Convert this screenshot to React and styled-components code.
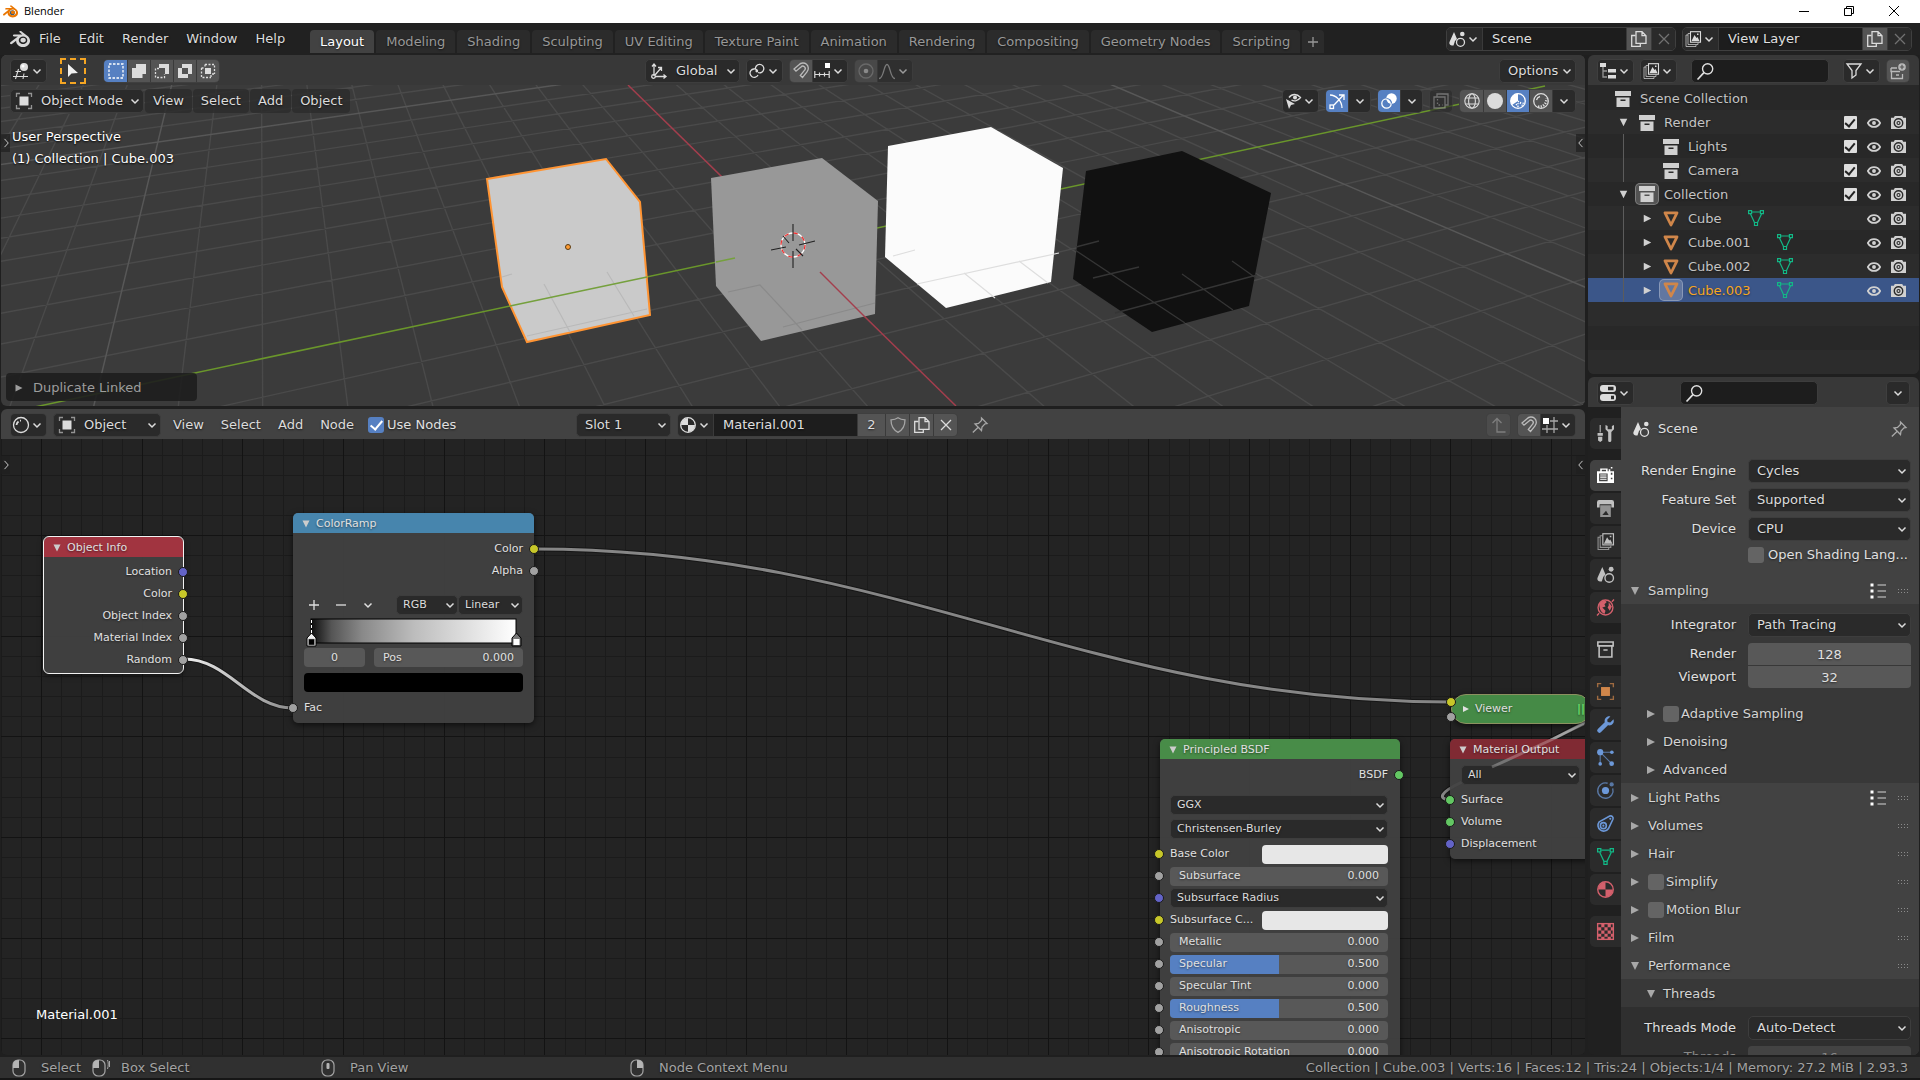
import React from 'react';
import styled, { createGlobalStyle, css } from 'styled-components';
import { SiBlender } from 'react-icons/si';

const GlobalStyle = createGlobalStyle`
  * { box-sizing: border-box; }

  body {
    margin: 0;
    background: #1f1f1f;
    color: #e0e0e0;
    font: 13px/16px "DejaVu Sans", sans-serif;
  }

  button, input, select {
    font: inherit;
    color: inherit;
    margin: 0;
    padding: 0;
    border: 0;
    background: none;
    text-shadow: inherit;
  }
`;

/* ---------- icons ---------- */

const Svg = styled.svg`
  display: block;
  flex: none;
  overflow: visible;
`;

const line = { fill: 'none', stroke: 'currentColor', strokeWidth: 1.3 };

const shapes = {
  viewport: (
    <g>
      <path {...line} strokeWidth="1.1" d="M5.5 6 2.5 16M11 10.500 10 16M2.500 8.500H8M0 13.500h15" />
      <circle cx="11" cy="4" r="4" fill="currentColor" />
      <circle cx="10" cy="3" r="1.500" fill="#fff" />
    </g>
  ),
  objectMode: (
    <g>
      <path {...line} opacity=".6" d="M.5 4V.5H4M12 .5h3.500V4M15.500 12v3.500H12M4 15.500H.5V12" />
      <rect x="3.500" y="3.500" width="9" height="9" fill="currentColor" />
    </g>
  ),
  dashBox: <rect {...line} x="1" y="1" width="14" height="14" strokeDasharray="2.500 1.500" stroke="#fff" />,
  extend: <path fill="currentColor" d="M5 1h10v10h-3.500v4H1V5h4z" />,
  subtract: (
    <g>
      <path fill="currentColor" d="M5 1h10v10h-4V5H5z" />
      <path {...line} strokeDasharray="2 1.500" d="M5 5.500H1.500v9h9V11" />
    </g>
  ),
  invert: <path fill="currentColor" fillRule="evenodd" d="M5 1h10v10h-4v4H1V5h4zM5 5v6h6V5z" />,
  intersect: (
    <g>
      <path {...line} strokeDasharray="2 1.500" d="M5 1.500h9.500V11M1.500 5v9.500H11M5 1.500V4M12 11h2.500M1.500 5H4M11 12v2.500" />
      <rect x="5" y="5" width="6" height="6" fill="currentColor" />
    </g>
  ),
  axes: (
    <g {...line}>
      <path d="M3 13V1M1 3.500 3 1l2 2.500M4 13.500h11M12.500 11.500l2.500 2-2.500 2M4 12l6-7M7 4.500h3.500V8" />
      <circle cx="2.500" cy="13.500" r="1.800" />
    </g>
  ),
  pivot: (
    <g {...line}>
      <path d="M9 9.500A4.200 4.200 0 1 0 6.500 6.500M8 7a4.200 4.200 0 1 0 1 5" />
      <circle cx="7.800" cy="8" r="1.400" fill="currentColor" stroke="none" />
    </g>
  ),
  magnet: (
    <path {...line} opacity=".75" d="M1 6 6 1.800a5.300 5.300 0 0 1 8 7L9.500 14.500 7.300 12.500l4.300-5.300a2.400 2.400 0 0 0-3.600-3.200L3 8.200z" />
  ),
  snapInc: (
    <g>
      <path {...line} d="M.8 8v7M15.200 8v7M5.500 9.500v4M10.500 9.500v4M1 11.500h14" strokeWidth="1.200" />
      <rect x="11" y="0" width="5" height="5" fill="#fff" />
    </g>
  ),
  snapGrid: (
    <g>
      <path {...line} opacity=".7" d="M5 8v8M12 0v16M8 4h8M0 12h16" />
      <rect x="1" y="1" width="6" height="6" fill="#fff" />
    </g>
  ),
  proportional: (
    <g opacity=".8">
      <circle {...line} cx="8" cy="8" r="7" opacity=".5" />
      <circle cx="8" cy="8" r="2.300" fill="currentColor" />
    </g>
  ),
  falloff: <path {...line} opacity=".7" d="M0 15.500c5 0 4.500-14 8-14s3 14 8 14" />,
  visibility: (
    <g>
      <path d="M1 6l9 5-4 1-2 4z" fill="currentColor" />
      <path {...line} d="M4 4.500c3-4 8-4 11.500 0-3 4-7 4-9 2.500" />
      <circle cx="10" cy="4.500" r="2" fill="currentColor" />
    </g>
  ),
  gizmo: (
    <g {...line} stroke="#fff">
      <path d="M1 2c6 0 12 6 12 13M5 12l9-9.500M10 2h5v5" />
      <rect x="1" y="12" width="3.500" height="3.500" />
    </g>
  ),
  overlay: (
    <g>
      <circle cx="10.500" cy="5.500" r="5.200" fill="#fff" />
      <circle cx="5.500" cy="10.500" r="4.700" fill="none" stroke="#fff" strokeWidth="1.300" />
      <path d="M5.500 5.500a5 5 0 0 1 5 5" fill="none" stroke="#5680c2" strokeWidth="1.200" />
    </g>
  ),
  xray: (
    <g {...line} opacity=".6">
      <path d="M4 4V1h11v11h-3M1 4h11v11H1z" />
      <path strokeDasharray="1.500 2" d="M4.500 6v6h5" />
    </g>
  ),
  wire: (
    <g {...line} strokeWidth="1.100">
      <circle cx="8" cy="8" r="7.200" />
      <ellipse cx="8" cy="8" rx="3.400" ry="7.200" />
      <path d="M1.500 5h13M1.500 11h13" />
    </g>
  ),
  solid: <circle cx="8" cy="8" r="8" fill="currentColor" />,
  material: (
    <g>
      <circle {...line} cx="8" cy="8" r="7.300" />
      <path fill="currentColor" d="M8 1a7 7 0 0 0-7 7h7zM8 8v7a7 7 0 0 0 7-7z" />
    </g>
  ),
  preview: (
    <g>
      <circle {...line} stroke="#fff" cx="8" cy="8" r="7.300" />
      <path fill="#fff" d="M8 .5a7.500 7.500 0 0 0-6 11.500L8 8z" />
      <path stroke="#fff" strokeWidth="1.300" strokeDasharray="1.300 1.300" fill="none" d="M8 8l5 5M6 11l3 4M10 9.500l4 1M8 10v5" />
    </g>
  ),
  rendered: (
    <g {...line}>
      <circle cx="8" cy="8" r="7.300" />
      <path d="M3.500 7A5 5 0 0 1 7 3.500" />
      <path strokeDasharray="1.300 1.300" strokeWidth="2.500" d="M5 13.500c5 1 8.500-3 8.500-8" />
    </g>
  ),
  scene: (
    <g>
      <path fill="currentColor" d="M5 1 .5 11c-.8 2.500 1.500 4 4 3.500L6 10l2-2z" />
      <circle cx="13.300" cy="3" r="2.300" fill="currentColor" />
      <circle {...line} cx="11.500" cy="11.300" r="4" />
    </g>
  ),
  viewLayer: (
    <g>
      <path {...line} opacity=".7" d="M3 4H1v11.500h10V14M5 2.500H3v11h10V12" strokeWidth="1" />
      <rect {...line} x="5.500" y=".7" width="10" height="10.500" strokeWidth="1.100" />
      <path fill="currentColor" d="m6.500 10 3-6 2 3 1-1 2 4zM12 2.500h1.500V4H12z" />
    </g>
  ),
  copy: (
    <g {...line}>
      <path d="M4.500 4.500H.7v10.800h8.600v-3" />
      <path d="M5 .7h6l4 4v7.600H5zM11 .7v4h4" />
    </g>
  ),
  close: <path {...line} d="m3 3 10 10M13 3 3 13" />,
  plus: <path {...line} d="M8 3v10M3 8h10" />,
  minus: <path {...line} d="M3 8h10" />,
  chevron: <path {...line} strokeWidth="1.500" d="m4.500 6.500 3.500 3.500 3.500-3.500" />,
  search: (
    <g {...line}>
      <circle cx="10" cy="5.500" r="4.800" />
      <path d="M6.500 9 .5 15.500" strokeWidth="1.600" />
    </g>
  ),
  filter: <path {...line} d="M1 1h14l-5 6.500V12l-4 3V7.500z" />,
  outliner: (
    <g>
      <path {...line} opacity=".6" d="M3 4v10h4M3 8h4" />
      <path fill="currentColor" d="M0 0h6v4H0zM8 6h8v3.500H8zM8 12h8v3.500H8z" />
    </g>
  ),
  newCollection: (
    <g opacity=".75">
      <path {...line} d="M1 5h6M1.500 8.500v7h11V11M1 5v3.500h9M6 12h3" />
      <circle cx="12" cy="4" r="3.800" fill="currentColor" />
      <path stroke="#565656" strokeWidth="1.200" d="M12 1.800v4.400M9.800 4h4.400" />
    </g>
  ),
  collection: <path fill="currentColor" fillRule="evenodd" d="M0 0h16v5H0zM1.500 6.500h13V16h-13zM5.500 8.500V10h5V8.500z" />,
  collectionTab: (
    <g {...line} strokeWidth="1.500">
      <path d="M.8 1h14.400v3.600H.8zM2 5v10h12V5M6 8.500h4" />
    </g>
  ),
  mesh: <path fill="none" stroke="#d0864a" strokeWidth="2.800" strokeLinejoin="round" d="M2 1.800h12L8 14z" />,
  meshData: (
    <g fill="none" stroke="#12b886" strokeWidth="1.200">
      <path d="M4 2h8M2.500 4l4 8.500M13.500 4l-4 8.500" />
      <path d="M.6.6h3v3h-3zM12.400.6h3v3h-3zM6.500 12.500h3v3h-3z" />
    </g>
  ),
  eye: (
    <g>
      <path {...line} strokeWidth="2" d="M1 8c3-6 11-6 14 0-3 6-11 6-14 0z" />
      <circle cx="8" cy="8" r="2.200" fill="currentColor" />
    </g>
  ),
  camera: (
    <g>
      <path fill="currentColor" fillRule="evenodd" d="M0 3h3l1-2h8l1 2h3v12H0z" />
      <circle cx="8" cy="8.500" r="4.500" fill="none" stroke="#2b2b2b" strokeWidth="1.500" />
      <circle cx="8" cy="8.500" r="1.600" fill="none" stroke="#2b2b2b" strokeWidth="1.200" />
    </g>
  ),
  properties: (
    <g>
      <rect x="0" y="0" width="16" height="7" rx="3" fill="currentColor" />
      <rect x="0" y="9" width="16" height="7" rx="3" fill="currentColor" />
      <path fill="#2b2b2b" d="M8 1.700h5.500v3.600H8zM11 10.700h3v3.600h-3z" />
    </g>
  ),
  pin: <path {...line} opacity=".65" d="m9.500 1 5.500 5.500-2 .3L10 10l-.5 3.500L3 7l3.500-.5L9.500 3.500zM6 10.500.8 15.500" />,
  shield: <path {...line} opacity=".6" d="M8 .8c2 1.500 4.500 2 7 2 0 6-2 10-7 12.500C3 12.800 1 8.800 1 2.800c2.500 0 5-.5 7-2z" />,
  up: <path {...line} opacity=".6" d="M1.500 6 6 1.500 10.500 6M6 2v13h8.500" />,
  shader: (
    <g {...line}>
      <circle cx="8" cy="8" r="7.500" />
      <path strokeWidth="1.800" d="M3.500 8A5 5 0 0 1 5.500 4.500M7 3.600h1" />
    </g>
  ),
  list: (
    <g>
      <path {...line} strokeWidth="1" d="M7.500 2H16M7.500 8H16M7.500 14H16" />
      <path fill="#fff" d="M.5.5h3v3h-3zM.5 6.500h3v3h-3zM.5 12.500h3v3h-3z" />
    </g>
  ),
  grip: <path stroke="#8c8c8c" strokeWidth="1" strokeDasharray="1 2" d="M3 6.500h11M3 9.500h11" />,
  tools: (
    <g fill="currentColor">
      <path d="M2.500 0h1v7h-1zM.5 7.500h5V10h-5zM1 11h4v3.500L3 16l-2-1.500z" />
      <path d="M8 0v4l2.500 2.500v8a1.500 1.500 0 0 0 3 0v-8L16 4V0l-2 1v3h-4V1z" />
    </g>
  ),
  render: (
    <path fill="currentColor" fillRule="evenodd" d="M0 4h3V1.500h7V4h1V2h1.500v2H16v11H0zM4.500 2.500V4h4V2.500zM2 6v7.500h8V6zM13 5.500v1.700h1.500V5.500zM13 10v1.500h1.500V10zM3 7h6v1H3zM3 9h6v1H3zM3 11h6v1H3zM13 0h1.500v1.500H13z" />
  ),
  output: (
    <g>
      <path fill="currentColor" d="M0 2a2 2 0 0 1 2-2h12a2 2 0 0 1 2 2v5h-2.500V4h-11v3H0z" />
      <path fill="currentColor" opacity=".7" fillRule="evenodd" d="M3 5h10v11H3zM5 14h6l-2.500-4z" />
    </g>
  ),
  world: (
    <g color="#d4606c">
      <circle {...line} cx="8" cy="8" r="7" />
      <path fill="currentColor" d="M2 4c3-3 7-3 7-1L7 5l1 2-3 1 3 3-1 3C4 13 2 9 2 4zM11 3l3 4-2 4-2-3 1-2z" />
      <path {...line} d="m0 15.500 2-2M14 2.500l2-2" />
    </g>
  ),
  objectTab: (
    <g color="#d0864a">
      <path {...line} opacity=".7" d="M.6 4V.6H4M12 .6h3.400V4M15.400 12v3.400H12M4 15.400H.6V12" />
      <rect x="3.800" y="3.800" width="8.400" height="8.400" fill="currentColor" />
    </g>
  ),
  wrench: (
    <path fill="#6c98d8" d="M15.500 3 12.500 6l-2.500-.3L9.600 3.500l3-3C10 -.5 6.500 2 7.300 5.800L.8 12.300a1.900 1.900 0 0 0 2.800 2.900l6.700-6.500C14 9.500 16.800 6.500 15.500 3z" />
  ),
  particles: (
    <g color="#6c98d8">
      <path {...line} opacity=".7" strokeWidth="1" d="M3 3h11M3 3v11M3 3l10.500 10.500" />
      <g fill="currentColor">
        <circle cx="3" cy="3" r="2.900" />
        <circle cx="14" cy="3" r="1.700" />
        <circle cx="3" cy="14" r="1.700" />
        <circle cx="13.800" cy="13.800" r="2.200" />
      </g>
    </g>
  ),
  physics: (
    <g color="#6c98d8">
      <path {...line} opacity=".7" d="M10 1.200A7.200 7.200 0 1 0 14.800 6" />
      <circle cx="8" cy="8" r="3.400" fill="currentColor" />
      <circle cx="13.800" cy="2.300" r="2" fill="currentColor" opacity=".7" />
    </g>
  ),
  constraint: (
    <g color="#6c98d8">
      <path {...line} strokeWidth="1.500" d="M2 6.500 12 1a2.300 2.300 0 0 1 3 3l-4.300 9A5.300 5.300 0 1 1 2 6.500z" />
      <circle {...line} strokeWidth="1.500" cx="6" cy="10" r="2.800" />
      <circle cx="6" cy="10" r="1" fill="currentColor" />
      <circle cx="12.500" cy="3.500" r="1" fill="currentColor" />
    </g>
  ),
  materialTab: (
    <g color="#d4606c">
      <circle {...line} cx="8" cy="8" r="7.300" />
      <path fill="currentColor" d="M8 1a7 7 0 0 0-7 7h7zM8 8v7a7 7 0 0 0 7-7z" />
    </g>
  ),
  texture: (
    <g color="#d4606c">
      <rect {...line} x=".6" y=".6" width="14.800" height="14.800" />
      <path fill="currentColor" d="M4 1h3v3H4zM10 1h3v3h-3zM1 4h3v3H1zM7 4h3v3H7zM13 4h2v3h-2zM4 7h3v3H4zM10 7h3v3h-3zM1 10h3v3H1zM7 10h3v3H7zM13 10h2v3h-2zM4 13h3v2H4zM10 13h3v2h-3z" />
    </g>
  ),
  left: <path {...line} d="M10 2.500 5 8l5 5.500" />,
  right: <path {...line} d="m6 2.500 5 5.500-5 5.500" />,
  open: <path fill="currentColor" d="M4 4h8l-4 8z" />,
  shut: <path fill="currentColor" d="M4 4v8l8-4z" />,
};

const Icon = ({ name, size = 16 }) => (
  <Svg width={size} height={size} viewBox="0 0 16 16" aria-hidden="true">
    {shapes[name]}
  </Svg>
);

const Mouse = ({ button, drag }) => (
  <Svg width="20" height="18" viewBox="0 0 20 18" aria-hidden="true">
    <rect x="1" y="1" width="12" height="16" rx="5" fill="none" stroke="#a5a5a5" strokeWidth="1.200" />
    {button === 'left' && <path fill="#b5b5b5" d="M1 9V6a5 5 0 0 1 5-5h1v8z" />}
    {button === 'right' && <path fill="#b5b5b5" d="M13 9V6a5 5 0 0 0-5-5H7v8z" />}
    {button === 'middle' && <rect x="5.500" y="4" width="3" height="6" rx="1" fill="#b5b5b5" />}
    {drag && <path d="M15.500 1c1 2 1 6 0 9M17.500 2v6" fill="none" stroke="#a5a5a5" />}
  </Svg>
);

/* ---------- shared controls ---------- */

const Row = styled.div`
  display: flex;
  align-items: center;
  gap: ${p => p.$gap || 0}px;
  ${p => p.$basis && css`
    flex: 0 0 ${p.$basis}px;
    min-width: 0;
  `}
`;

const Spacer = styled.div`
  flex: ${p => p.$grow || 1};
`;

const Header = styled.header`
  position: relative;
  z-index: 1;
  flex: none;
  display: flex;
  align-items: center;
  height: 30px;
  padding: 2px 9px 0;
  background: ${p => p.$tone || '#383838'};
  text-shadow: 0 1px 2px rgba(0, 0, 0, .6);
`;

const Group = styled.div`
  display: inline-flex;
  flex: none;
  height: 24px;
  border: 1px solid #3f3f3f;
  border-radius: 5px;
  overflow: hidden;
  opacity: ${p => p.$dim ? .6 : 1};
`;

const tones = { dark: '#2a2a2a', mid: '#545454', blue: '#5680c2' };

const Seg = styled.button`
  display: flex;
  align-items: center;
  justify-content: center;
  flex: none;
  width: ${p => p.$menu ? 35 : p.$w || 23}px;
  color: #dcdcdc;
  background: ${p => tones[p.$tone || 'dark']};

  & + & {
    border-left: 1px solid #3a3a3a;
  }
`;

const NameInput = styled.input`
  width: 145px;
  padding: 0 9px;
  background: #1d1d1d;
  border: solid #3a3a3a;
  border-width: 0 1px;
`;

const Picker = styled.label`
  position: relative;
  display: flex;
  align-items: center;
  flex: ${p => p.$w ? 'none' : 1};
  width: ${p => p.$w ? `${p.$w}px` : 'auto'};
  min-width: 0;
  height: ${p => p.$small ? 20 : 24}px;
  background: #2a2a2a;
  border: 1px solid #3d3d3d;
  border-radius: 5px;
  color: #dcdcdc;

  select {
    appearance: none;
    flex: 1;
    min-width: 0;
    height: 100%;
    padding-left: ${p => p.$icon ? 30 : p.$small ? 6 : 8}px;
    outline: 0;
  }

  & > svg {
    position: absolute;
    pointer-events: none;
    left: 5px;
  }

  & > svg:last-child {
    left: auto;
    right: ${p => p.$small ? -1 : 0}px;
  }
`;

const Dropdown = ({ label, value, icon, width, small, id }) => (
  <Picker $w={width} $icon={icon} $small={small}>
    {icon && <Icon name={icon} />}
    <select id={id} aria-label={label} defaultValue={value}>
      <option>{value}</option>
    </select>
    <Icon name="chevron" />
  </Picker>
);

const IconMenu = ({ icon, label }) => (
  <Group>
    <Seg $menu aria-label={label}>
      <Icon name={icon} />
      <Icon name="chevron" />
    </Seg>
  </Group>
);

const Check = styled.input.attrs({ type: 'checkbox' })`
  appearance: none;
  flex: none;
  display: grid;
  place-items: center;
  width: 16px;
  height: 16px;
  border-radius: 3px;
  background: #646464;

  &:checked {
    background: #5680c2;
  }

  &:checked::before {
    content: '';
    width: 5px;
    height: 10px;
    border: solid #fff;
    border-width: 0 2px 2px 0;
    transform: translateY(-1px) rotate(40deg);
  }
`;

const Search = styled.label`
  display: flex;
  align-items: center;
  flex: none;
  width: 138px;
  height: 24px;
  padding: 0 5px;
  background: #1d1d1d;
  border: 1px solid #3d3d3d;
  border-radius: 5px;

  input {
    flex: 1;
    min-width: 0;
    outline: 0;
  }
`;

const SearchBox = ({ label }) => (
  <Search>
    <Icon name="search" size={17} />
    <input type="text" aria-label={label} />
  </Search>
);

/* ---------- window frame ---------- */

const Window = styled.div`
  display: flex;
  flex-direction: column;
  height: 100vh;
  overflow: hidden;
  white-space: nowrap;
`;

const TitleBar = styled.div`
  flex: none;
  display: flex;
  align-items: center;
  height: 23px;
  padding: 0 21px 1px 3px;
  background: #fff;
  color: #000;
  font: 11px/16px "Open Sans", sans-serif;

  span {
    margin-left: 6px;
  }

  button {
    margin-left: 35px;
  }
`;

const TopBar = styled.nav`
  flex: none;
  display: flex;
  align-items: flex-start;
  height: 32px;
  padding: 4px 8px 2px 10px;
  background: #212121;
  text-shadow: 0 1px 2px rgba(0, 0, 0, .6);
`;

const Menus = styled.div`
  display: flex;
  align-items: center;
  height: 24px;
  flex: 0 0 300px;
`;

const MenuButton = styled.button`
  height: 24px;
  padding: 0 ${p => p.$wide ? 9 : 8}px;
  color: #dcdcdc;
  ${p => p.$boxed && css`
    background: rgba(45, 45, 45, .85);
    border-radius: 4px;
  `}
`;

const Tabs = styled.div`
  flex: 1;
  display: flex;
  gap: 2px;
  padding-top: 3px;
`;

const Tab = styled.button`
  height: 23px;
  padding: 0 ${p => p.$icon ? 3 : 10}px;
  border-radius: 4px 4px 0 0;
  background: ${p => p.$active ? '#424242' : '#2b2b2b'};
  color: ${p => p.$active ? '#fff' : '#989898'};
`;

const Main = styled.main`
  flex: 1;
  min-height: 0;
  display: flex;
  gap: 3px;
  padding: 0 1px 2px;
`;

const Column = styled.div`
  display: flex;
  flex-direction: column;
  gap: 3px;
  min-width: 0;
  flex: ${p => p.$w ? `0 0 ${p.$w}px` : 1};
`;

const Area = styled.section`
  position: relative;
  flex: ${p => p.$grow} 1 0;
  min-height: 0;
  display: flex;
  flex-direction: column;
  overflow: hidden;
  border-radius: 6px;
  background: ${p => p.$bg};
`;

const Backdrop = styled.svg`
  position: absolute;
  inset: 0;
  width: 100%;
  height: 100%;
  pointer-events: none;
`;

const EdgeTab = styled.button`
  position: absolute;
  z-index: 2;
  top: ${p => p.$top}px;
  ${p => p.$side}: 0;
  width: 9px;
  height: 18px;
  display: flex;
  align-items: center;
  justify-content: center;
  background: rgba(32, 32, 32, .7);
  color: #ccc;
`;

const StatusBar = styled.footer`
  flex: none;
  display: flex;
  align-items: center;
  height: 23px;
  padding: 1px 12px 0;
  background: #303030;
  border-bottom: 2px solid #161616;
  color: #a3a3a3;
  text-shadow: 0 1px 2px rgba(0, 0, 0, .6);
`;

const Hint = styled.span`
  display: flex;
  align-items: center;
  gap: 9px;
  margin-right: 11px;
`;

/* ---------- 3D viewport ---------- */

// ground plane to screen
const project = (s, t) => {
  const w = 1 - 0.048 * s + 0.0199 * t;
  return [(793 - 12.5 * s + 71.53 * t) / w, (246 + 13.4 * s - 6.95 * t) / w];
};

const segment = (a, b) => `M${a.map(Math.round)}L${b.map(Math.round)}`;

const groundLines = () => {
  const minor = [];
  const major = [];
  for (let s = -34; s <= 14; s++) {
    if (s === 0) continue;
    const from = (-(1 - 0.048 * s) + 0.12) / 0.0199;
    (s % 10 ? minor : major).push(segment(project(s, from), project(s, 70)));
  }
  for (let t = -44; t <= 44; t++) {
    if (t === 0) continue;
    const to = (1 + 0.0199 * t - 0.08) / 0.048;
    (t % 10 ? minor : major).push(segment(project(-40, t), project(to, t)));
  }
  return [minor.join(''), major.join('')];
};

const [minorGround, majorGround] = groundLines();

const Scene3D = () => (
  <Backdrop viewBox="1 55 1584 351" preserveAspectRatio="xMidYMid slice" aria-hidden="true">
    <path d={minorGround} stroke="#4a4a4a" strokeWidth="1.400" />
    <path d={majorGround} stroke="#575757" strokeWidth="1.500" />
    <path d="M628 85 956 406" stroke="#a33e4d" strokeWidth="1.500" />
    <path d="M30 408 1545 86" stroke="#6a962b" strokeWidth="1.500" />
    <polygon points="487,179 606,159 640,202 650,315 527,342 502,287" fill="#cacaca" stroke="#ff9433" strokeWidth="2" />
    <polygon points="711,178 822,158 878,201 875,314 761,341 716,286" fill="#989898" />
    <polygon points="888,146 991,127 1063,168 1051,282 946,308 885,257" fill="#fbfbfb" />
    <polygon points="1086,171 1182,151 1271,193 1249,306 1152,332 1073,279" fill="#111" />
    <path d="M502 277l10-3M544 284l26 48M607 272l27 44M527 336l120-27" stroke="#b9b9b9" strokeWidth="1.200" />
    <path d="M728 292l32-7 42 45M783 327l92-24" stroke="#8a8a8a" strokeWidth="1.200" fill="none" />
    <path d="M893 256l22-6M917 284l142-31M964 273l31 25M1019 261l29 22" stroke="#dedede" strokeWidth="1.200" />
    <path d="M1076 247l23-6M1093 278l46-11M1075 250l110 73M1115 313l142-38M1182 274l51 36M1232 261l24 17" stroke="#353535" strokeWidth="1.300" />
    <path d="M510 306 647 277M716 262l19-4" stroke="#75a03d" strokeWidth="1.500" />
    <path d="M820 272l45 45" stroke="#a33e4d" strokeWidth="1.500" />
    <circle cx="568" cy="247" r="2.500" fill="#ff9c33" stroke="#5a3a10" />
    <circle cx="793" cy="245" r="12" fill="none" stroke="#fff" strokeWidth="1.300" />
    <circle cx="793" cy="245" r="12" fill="none" stroke="#e33" strokeWidth="1.300" strokeDasharray="4.700 4.700" />
    <path d="M793 224v17M793 251v17M771 250l15-3M799 245l16-4M783 236l6 7M796 249l7 7" stroke="#222" strokeWidth="1.100" />
  </Backdrop>
);

const ViewHeader = styled(Header)`
  align-items: flex-end;
  background: none;
  height: 28px;
`;

const ViewInfo = styled.div`
  position: relative;
  padding: 13px 11px 0;
  line-height: 22px;
  color: #fff;
  text-shadow: 0 1px 2px #000;
`;

const LastOperator = styled.button`
  position: absolute;
  left: 5px;
  bottom: 5px;
  display: flex;
  align-items: center;
  gap: 7px;
  width: 191px;
  height: 28px;
  padding: 1px 6px 0;
  border-radius: 4px;
  background: rgba(30, 30, 30, .9);
  color: #9d9d9d;
`;

const CursorTool = styled.button`
  display: flex;
  align-items: center;
  justify-content: center;
  width: 26px;
  height: 26px;
  margin: 0 17px 0 13px;
  border: 2px dashed #f5a623;
`;

const Viewport3D = () => (
  <Area $grow={351} $bg="#3b3b3b">
    <Scene3D />
    <Header>
      <Row $basis={635}>
        <IconMenu icon="viewport" label="Editor type" />
        <CursorTool aria-label="Select box">
          <Svg width="12" height="16" viewBox="0 0 12 16">
            <path d="M1 1v13l3.500-3.500L11 10z" fill="#f0f0f0" />
          </Svg>
        </CursorTool>
        <Group>
          <Seg $tone="blue" aria-label="Set"><Icon name="dashBox" /></Seg>
          {['extend', 'subtract', 'invert', 'intersect'].map(name => (
            <Seg key={name} $tone="mid" aria-label={name}><Icon name={name} /></Seg>
          ))}
        </Group>
      </Row>
      <Row $gap={6}>
        <Dropdown label="Transform orientation" icon="axes" value="Global" width={95} />
        <IconMenu icon="pivot" label="Pivot point" />
        <Group>
          <Seg $w={22} $tone="mid" aria-label="Snap"><Icon name="magnet" /></Seg>
          <Seg $menu aria-label="Snap to"><Icon name="snapInc" /><Icon name="chevron" /></Seg>
        </Group>
        <Group $dim>
          <Seg $w={22} $tone="mid" aria-label="Proportional editing"><Icon name="proportional" /></Seg>
          <Seg $menu aria-label="Falloff"><Icon name="falloff" /><Icon name="chevron" /></Seg>
        </Group>
      </Row>
      <Spacer />
      <Dropdown label="Tool options" value="Options" width={77} />
    </Header>
    <ViewHeader>
      <Row $gap={1}>
        <Dropdown label="Mode" icon="objectMode" value="Object Mode" width={134} />
        {['View', 'Select', 'Add', 'Object'].map(text => <MenuButton key={text} $boxed>{text}</MenuButton>)}
      </Row>
      <Spacer />
      <Row $gap={6}>
        <IconMenu icon="visibility" label="Object visibility" />
        <Group>
          <Seg $w={22} $tone="blue" aria-label="Show gizmo"><Icon name="gizmo" /></Seg>
          <Seg $w={22} aria-label="Gizmo options"><Icon name="chevron" /></Seg>
        </Group>
        <Group>
          <Seg $w={22} $tone="blue" aria-label="Show overlays"><Icon name="overlay" /></Seg>
          <Seg $w={22} aria-label="Overlay options"><Icon name="chevron" /></Seg>
        </Group>
        <Group $dim>
          <Seg $w={22} aria-label="Toggle x-ray"><Icon name="xray" /></Seg>
        </Group>
        <Group>
          <Seg $tone="mid" aria-label="Wireframe"><Icon name="wire" /></Seg>
          <Seg $tone="mid" aria-label="Solid"><Icon name="solid" /></Seg>
          <Seg $tone="blue" aria-label="Material preview"><Icon name="preview" /></Seg>
          <Seg $tone="mid" aria-label="Rendered"><Icon name="rendered" /></Seg>
          <Seg aria-label="Shading options"><Icon name="chevron" /></Seg>
        </Group>
      </Row>
    </ViewHeader>
    <ViewInfo>
      <div>User Perspective</div>
      <div>(1) Collection | Cube.003</div>
    </ViewInfo>
    <EdgeTab $side="left" $top={79} aria-label="Show toolbar"><Icon name="right" size={12} /></EdgeTab>
    <EdgeTab $side="right" $top={79} aria-label="Show sidebar"><Icon name="left" size={12} /></EdgeTab>
    <LastOperator><Icon name="shut" size={14} />Duplicate Linked</LastOperator>
  </Area>
);

/* ---------- shader editor ---------- */

const Canvas = styled.div`
  position: relative;
  flex: 1;
  min-height: 0;
  overflow: hidden;
  background: #232323;
  font-size: 11px;
`;

const NodeBox = styled.article`
  position: absolute;
  left: ${p => p.$x}px;
  top: ${p => p.$y}px;
  width: ${p => p.$w}px;
  border-radius: 5px;
  background: rgba(66, 66, 66, .93);
  box-shadow: 0 2px 6px rgba(0, 0, 0, .6);
  text-shadow: 0 1px 2px rgba(0, 0, 0, .5);
  ${p => p.$selected && css`outline: 1px solid #f2f2f2;`}
`;

const NodeTitle = styled.h3`
  display: flex;
  align-items: center;
  gap: 3px;
  height: 20px;
  margin: 0;
  padding: 1px 6px 0;
  border-radius: 5px 5px 0 0;
  background: ${p => p.$color};
  font-size: 11px;
  font-weight: normal;

  svg {
    color: #ccc;
  }
`;

const NodeBody = styled.div`
  display: flex;
  flex-direction: column;
  gap: ${p => p.$gap || 0}px;
  padding: ${p => p.$pad};
`;

const socketColors = { yellow: '#c7c729', gray: '#a1a1a1', blue: '#6363c7', green: '#63c763' };

const Socket = styled.i`
  position: absolute;
  ${p => p.$side}: -16px;
  width: 10px;
  height: 10px;
  border: 1px solid #1a1a1a;
  border-radius: 50%;
  background: ${p => socketColors[p.$color]};
`;

const NodeRow = styled.div`
  position: relative;
  display: flex;
  align-items: center;
  justify-content: ${p => p.$out ? 'flex-end' : 'flex-start'};
  gap: 4px;
  height: ${p => p.$h || 22}px;
`;

const Port = ({ text, color, out }) => (
  <NodeRow $out={out}>
    <Socket $side={out ? 'right' : 'left'} $color={color} />
    {text}
  </NodeRow>
);

const ValueBox = styled.label`
  position: relative;
  flex: 1;
  min-width: 0;
  display: flex;
  align-items: center;
  height: 19px;
  padding: 0 9px;
  overflow: hidden;
  border-radius: 4px;
  background: #585858;

  span {
    position: relative;
    flex: none;
  }

  input {
    position: relative;
    flex: 1;
    min-width: 0;
    text-align: ${p => p.$center ? 'center' : 'right'};
    outline: 0;
  }
`;

const Fill = styled.div`
  position: absolute;
  inset: 0 auto 0 0;
  background: #5680c2;
`;

const Swatch = styled.input`
  width: ${p => p.$w ? `${p.$w}px` : '100%'};
  height: 19px;
  margin-left: auto;
  border-radius: 4px;
  background: ${p => p.value};
  color: transparent;
  text-shadow: none;
`;

const Value = ({ text, value, fill }) => (
  <ValueBox>
    {fill && <Fill style={{ width: `${fill * 100}%` }} />}
    <span>{text}</span>
    <input type="text" defaultValue={value} />
  </ValueBox>
);

const bsdfInputs = [
  { text: 'Base Color', color: 'yellow', swatch: '#e7e7e7' },
  { text: 'Subsurface', color: 'gray', value: '0.000' },
  { text: 'Subsurface Radius', color: 'blue' },
  { text: 'Subsurface C...', color: 'yellow', swatch: '#e7e7e7' },
  { text: 'Metallic', color: 'gray', value: '0.000' },
  { text: 'Specular', color: 'gray', value: '0.500', fill: 0.5 },
  { text: 'Specular Tint', color: 'gray', value: '0.000' },
  { text: 'Roughness', color: 'gray', value: '0.500', fill: 0.5 },
  { text: 'Anisotropic', color: 'gray', value: '0.000' },
  { text: 'Anisotropic Rotation', color: 'gray', value: '0.000' },
];

const RampTools = styled.div`
  display: flex;
  align-items: center;
  height: 20px;
  margin: 13px 0 4px;
  padding-left: 2px;

  button {
    width: 16px;
    margin-right: 11px;
  }
`;

const RampFields = styled.div`
  display: flex;
  gap: 9px;
  padding-top: 1px;
`;

const ViewerBox = styled(NodeBox)`
  display: flex;
  align-items: center;
  gap: 3px;
  height: 30px;
  padding: 0 5px 0 8px;
  border: 1px solid #8c9160;
  border-radius: 15px;
  background: #458a46;

  b {
    margin-left: auto;
    color: #6fe06f;
  }
`;

const ViewerSocket = styled(Socket)`
  left: -6px;
  top: ${p => p.$top}px;
`;

const CanvasLabel = styled.div`
  position: absolute;
  left: 35px;
  bottom: 32px;
  color: #fff;
  font-size: 13px;
`;

const gridPath = (step, from, skip) => {
  const lines = [];
  for (let i = 0; i < 200; i++) {
    if (skip && i % 5 === 0) continue;
    const at = Math.floor(i * step);
    lines.push(`M${from.x + at}.5 0V2000M0 ${from.y + at}.5H4000`);
  }
  return lines.join('');
};

const origin = { x: -60, y: -4 };

const links = {
  random: 'M183 220C227 220 248 269 292 269',
  color: 'M534 110C900 110 1083 263 1450 263',
  surface: 'M1600 275 1583 284 1552 300 1496 326 1459 344C1440 353 1436 360 1449 361',
};

const NodeGrid = () => (
  <Backdrop aria-hidden="true">
    <path d={gridPath(20.132, origin, true)} stroke="#1b1b1b" />
    <path d={gridPath(100.66, origin)} stroke="#131313" />
    <defs>
      <linearGradient id="wire">
        <stop offset="0" stopColor="#f0f0f0" />
        <stop offset="1" stopColor="#8a8a8a" />
      </linearGradient>
    </defs>
    <g fill="none" strokeLinecap="round">
      <path d={links.random + links.color + links.surface} stroke="#161616" strokeWidth="5" />
      <path d={links.random} stroke="url(#wire)" strokeWidth="3" />
      <path d={links.color + links.surface} stroke="#868686" strokeWidth="3" />
    </g>
  </Backdrop>
);

// the part of a link that shines through the node it runs under
const LinkGhost = () => (
  <Backdrop aria-hidden="true">
    <path d="M1583 285 1552 300 1491 328" fill="none" stroke="#fff" strokeOpacity=".25" strokeWidth="3" />
  </Backdrop>
);

const Ramp = () => (
  <Svg width="218" height="28" viewBox="0 0 218 28" aria-hidden="true">
    <defs>
      <linearGradient id="ramp">
        <stop offset="0" stopColor="#0c0c0c" />
        <stop offset=".1" stopColor="#555" />
        <stop offset=".25" stopColor="#898989" />
        <stop offset=".5" stopColor="#bcbcbc" />
        <stop offset="1" stopColor="#fff" />
      </linearGradient>
    </defs>
    <rect x="7" y="0" width="205" height="24" fill="url(#ramp)" stroke="#000" />
    <path d="M7.500 1v14" stroke="#fff" strokeDasharray="3 2" />
    <path d="M3 27v-8l4.500-5 4.500 5v8z" fill="#eee" stroke="#000" />
    <path d="M4.500 20h6v6h-6z" fill="#000" stroke="#aaa" strokeWidth=".5" />
    <path d="M208 27v-8l4.500-5 4.500 5v8z" fill="#777" stroke="#000" />
    <path d="M209.500 20h6v6h-6z" fill="#fff" />
  </Svg>
);

const ShaderEditor = () => (
  <Area $grow={646} $bg="#232323">
    <Header $tone="#424242">
      <Row $basis={566} $gap={1}>
        <Row $gap={6}>
          <IconMenu icon="shader" label="Editor type" />
          <Dropdown label="Shader type" icon="objectMode" value="Object" width={108} />
        </Row>
        <Row $basis={2} />
        {['View', 'Select', 'Add', 'Node'].map(text => <MenuButton key={text}>{text}</MenuButton>)}
        <Row as="label" $gap={3}>
          <Row $basis={2} />
          <Check defaultChecked />
          Use Nodes
        </Row>
      </Row>
      <Row $gap={6}>
        <Dropdown label="Material slot" value="Slot 1" width={95} />
        <Group>
          <Seg $menu aria-label="Browse material"><Icon name="material" /><Icon name="chevron" /></Seg>
          <NameInput aria-label="Material name" defaultValue="Material.001" />
          <Seg $w={27} $tone="mid">2</Seg>
          <Seg $w={24} $tone="mid" aria-label="Fake user"><Icon name="shield" /></Seg>
          <Seg $w={24} $tone="mid" aria-label="New material"><Icon name="copy" /></Seg>
          <Seg $w={24} $tone="mid" aria-label="Unlink"><Icon name="close" /></Seg>
        </Group>
        <MenuButton aria-label="Pin material"><Icon name="pin" /></MenuButton>
      </Row>
      <Spacer />
      <Row $gap={6}>
        <Group $dim><Seg $tone="mid" aria-label="Parent node tree"><Icon name="up" /></Seg></Group>
        <Group>
          <Seg $w={22} $tone="mid" aria-label="Snap"><Icon name="magnet" /></Seg>
          <Seg $menu aria-label="Snap node element"><Icon name="snapGrid" /><Icon name="chevron" /></Seg>
        </Group>
      </Row>
    </Header>
    <Canvas>
      <NodeGrid />
      <EdgeTab $side="left" $top={17} aria-label="Show toolbar"><Icon name="right" size={12} /></EdgeTab>
      <EdgeTab $side="right" $top={17} aria-label="Show sidebar"><Icon name="left" size={12} /></EdgeTab>

      <NodeBox $x={43} $y={98} $w={139} $selected>
        <NodeTitle $color="#a13440"><Icon name="open" size={14} />Object Info</NodeTitle>
        <NodeBody $pad="4px 11px 2px">
          <Port out text="Location" color="blue" />
          <Port out text="Color" color="yellow" />
          <Port out text="Object Index" color="gray" />
          <Port out text="Material Index" color="gray" />
          <Port out text="Random" color="gray" />
        </NodeBody>
      </NodeBox>

      <NodeBox $x={292} $y={74} $w={241}>
        <NodeTitle $color="#4785ad"><Icon name="open" size={14} />ColorRamp</NodeTitle>
        <NodeBody $pad="5px 11px 4px">
          <Port out text="Color" color="yellow" />
          <Port out text="Alpha" color="gray" />
          <RampTools>
            <button aria-label="Add stop"><Icon name="plus" /></button>
            <button aria-label="Remove stop"><Icon name="minus" /></button>
            <button aria-label="Ramp menu"><Icon name="chevron" /></button>
            <Spacer />
            <Dropdown small label="Color mode" value="RGB" width={62} />
            <Dropdown small label="Interpolation" value="Linear" width={65} />
          </RampTools>
          <Ramp />
          <RampFields>
            <Row $basis={61}>
              <ValueBox $center><input type="text" aria-label="Active stop" defaultValue="0" /></ValueBox>
            </Row>
            <Value text="Pos" value="0.000" />
          </RampFields>
          <NodeRow $h={30}><Swatch type="button" aria-label="Stop color" value="#000000" /></NodeRow>
          <Port text="Fac" color="gray" />
        </NodeBody>
      </NodeBox>

      <NodeBox $x={1159} $y={300} $w={240}>
        <NodeTitle $color="#488c48"><Icon name="open" size={14} />Principled BSDF</NodeTitle>
        <NodeBody $pad="5px 12px 4px 10px">
          <Port out text="BSDF" color="green" />
          <NodeBody $pad="9px 0 4px" $gap={4}>
            <Row><Dropdown small label="Distribution" value="GGX" /></Row>
            <Row><Dropdown small label="Subsurface method" value="Christensen-Burley" /></Row>
          </NodeBody>
          {bsdfInputs.map(item => (
            <NodeRow key={item.text}>
              <Socket $side="left" $color={item.color} />
              {item.swatch && <>{item.text}<Swatch type="button" $w={126} aria-label={item.text} value={item.swatch} /></>}
              {item.value && <Value {...item} />}
              {!item.swatch && !item.value && <Dropdown small label={item.text} value={item.text} />}
            </NodeRow>
          ))}
        </NodeBody>
      </NodeBox>

      <ViewerBox $x={1450} $y={255} $w={140}>
        <ViewerSocket $side="left" $color="yellow" $top={2} />
        <ViewerSocket $side="left" $color="gray" $top={17} />
        <Icon name="shut" size={12} />
        Viewer
        <b>||</b>
      </ViewerBox>

      <NodeBox $x={1449} $y={300} $w={141}>
        <NodeTitle $color="#802a33"><Icon name="open" size={14} />Material Output</NodeTitle>
        <NodeBody $pad="6px 11px 4px">
          <Row><Dropdown small label="Target" value="All" /></Row>
          <NodeBody $pad="4px 0 0">
            <Port text="Surface" color="green" />
            <Port text="Volume" color="green" />
            <Port text="Displacement" color="blue" />
          </NodeBody>
        </NodeBody>
      </NodeBox>
      <LinkGhost />
      <CanvasLabel>Material.001</CanvasLabel>
    </Canvas>
  </Area>
);

/* ---------- outliner ---------- */

const TreeRow = styled.li`
  display: flex;
  align-items: center;
  height: 24px;
  padding: 0 9px 0 23px;
  color: ${p => p.$active ? '#f5a623' : '#c4c4c4'};
  background: ${p => p.$active ? '#3b5689' : 'transparent'};
`;

const Tree = styled.ul`
  flex: 1;
  position: relative;
  margin: 0;
  padding: 1px 0 0;
  list-style: none;
  text-shadow: 0 1px 2px rgba(0, 0, 0, .5);
  background: repeating-linear-gradient(#282828 0 24px, #2c2c2c 24px 48px) 0 1px;
`;

const Slot = styled.span`
  display: flex;
  align-items: center;
  justify-content: center;
  align-self: stretch;
  flex: 0 0 24px;
  padding-top: 1px;
  color: #d0d0d0;
  ${p => p.$guide && css`background: linear-gradient(#5c5c5c, #5c5c5c) center / 1px 100% no-repeat;`}
  ${p => p.$lit && css`
    margin: 1px 0;
    padding-top: 0;
    border: 1px solid rgba(255, 255, 255, .25);
    border-radius: 5px;
    background: rgba(255, 255, 255, .2);
  `}
`;

const TreeLabel = styled.span`
  padding-top: 2px;
  margin: 0 ${p => p.$data ? 26 : 0}px 0 5px;
`;

const TreeCheck = styled(Check)`
  width: 13px;
  height: 13px;
  border-radius: 1px;

  &:checked {
    background: #dedede;
  }

  &:checked::before {
    width: 4px;
    height: 8px;
    border-color: #222;
  }
`;

const tree = [
  { label: 'Scene Collection', icon: 'collection' },
  { label: 'Render', icon: 'collection', arrow: 'open', check: true },
  { label: 'Lights', icon: 'collection', indent: true, check: true },
  { label: 'Camera', icon: 'collection', indent: true, check: true },
  { label: 'Collection', icon: 'collection', arrow: 'open', check: true, lit: true },
  { label: 'Cube', icon: 'mesh', indent: true, arrow: 'shut', data: true },
  { label: 'Cube.001', icon: 'mesh', indent: true, arrow: 'shut', data: true },
  { label: 'Cube.002', icon: 'mesh', indent: true, arrow: 'shut', data: true },
  { label: 'Cube.003', icon: 'mesh', indent: true, arrow: 'shut', data: true, lit: true, active: true },
];

const Outliner = () => (
  <Area $grow={319} $bg="#2b2b2b">
    <Header>
      <Row $gap={6}>
        <IconMenu icon="outliner" label="Editor type" />
        <IconMenu icon="viewLayer" label="Display mode" />
      </Row>
      <Spacer />
      <SearchBox label="Filter outliner" />
      <Spacer />
      <IconMenu icon="filter" label="Filter" />
      <Row $basis={6} />
      <Group><Seg $w={22} $tone="mid" aria-label="New collection"><Icon name="newCollection" /></Seg></Group>
    </Header>
    <Tree>
      {tree.map((item, i) => (
        <TreeRow key={item.label} $active={item.active}>
          {item.indent && <Slot $guide />}
          {(item.arrow || item.indent) && <Slot>{item.arrow && <Icon name={item.arrow} size={15} />}</Slot>}
          <Slot $lit={item.lit}><Icon name={item.icon} /></Slot>
          <TreeLabel $data={item.data}>{item.label}</TreeLabel>
          {item.data && <Icon name="meshData" />}
          <Spacer />
          {item.check && <Slot><TreeCheck defaultChecked aria-label={`Include ${item.label}`} /></Slot>}
          {i > 0 && (
            <>
              <Slot as="button" aria-label={`Hide ${item.label}`}><Icon name="eye" size={14} /></Slot>
              <Slot as="button" aria-label={`Render ${item.label}`}><Icon name="camera" size={15} /></Slot>
            </>
          )}
        </TreeRow>
      ))}
    </Tree>
  </Area>
);

/* ---------- properties ---------- */

const PropsBody = styled.div`
  flex: 1;
  min-height: 0;
  display: flex;
  background: #202020;
`;

const PropTabs = styled.nav`
  flex: 0 0 33px;
  display: flex;
  flex-direction: column;
  gap: 11px;
  padding: 11px 0 0 2px;

  div {
    display: flex;
    flex-direction: column;
    gap: 2px;
  }
`;

const PropTab = styled.button`
  display: flex;
  align-items: center;
  justify-content: center;
  height: 31px;
  border-radius: 5px 0 0 5px;
  color: ${p => p.$active ? '#fff' : '#c0c0c0'};
  background: ${p => p.$active ? '#424242' : '#2b2b2b'};
`;

const Panel = styled.div`
  flex: 1;
  min-width: 0;
  overflow: hidden;
  background: #424242;
  text-shadow: 0 1px 2px rgba(0, 0, 0, .5);
`;

const Crumb = styled.div`
  display: flex;
  align-items: center;
  gap: 9px;
  height: 43px;
  padding: 0 12px;
`;

const Fields = styled.div`
  display: flex;
  flex-direction: column;
  gap: 7px;
  padding: 10px 8px ${p => p.$bottom}px 0;
  background: ${p => p.$bg || 'transparent'};
`;

const Field = styled.div`
  display: flex;
  align-items: center;
  height: ${p => p.$h || 22}px;
  opacity: ${p => p.$dim ? .5 : 1};

  & > label:first-child {
    flex: 0 0 127px;
    padding-right: 12px;
    text-align: right;
  }
`;

const NumberInput = styled.input`
  flex: 1;
  min-width: 0;
  height: 22px;
  background: #585858;
  text-align: center;
  border-radius: ${p => p.$part === 'top' ? '4px 4px 0 0' : '0 0 4px 4px'};
`;

const Stack = styled.div`
  display: flex;
  flex-direction: column;
  gap: 1px;
`;

const Section = styled.div`
  display: flex;
  align-items: center;
  gap: ${p => p.$sub ? 4 : 5}px;
  height: 28px;
  padding: 1px 8px 0 ${p => p.$sub ? 22 : 6}px;
  background: ${p => p.$bg || (p.$sub ? '#383838' : 'transparent')};
  color: #d4d4d4;

  & > svg:first-child {
    color: #a8a8a8;
  }

  & > svg + svg {
    margin-left: 4px;
  }

  label {
    display: flex;
    align-items: center;
    gap: 2px;
  }
`;

const SectionName = styled.div`
  flex: 1;
  padding-top: 1px;
`;

const SectionHead = ({ title, open, check, list, sub, bg }) => (
  <Section $sub={sub} $bg={bg}>
    <Icon name={open ? 'open' : 'shut'} />
    <SectionName>
      {check ? <label><Check />{title}</label> : title}
    </SectionName>
    {list && <Icon name="list" />}
    {!sub && <Icon name="grip" />}
  </Section>
);

const propTabs = [
  ['tools'],
  ['render', 'output', 'viewLayer', 'scene', 'world'],
  ['collectionTab'],
  ['objectTab', 'wrench', 'particles', 'physics', 'constraint', 'meshData', 'materialTab'],
  ['texture'],
];

const Properties = () => (
  <Area $grow={677} $bg="#202020">
    <Header>
      <IconMenu icon="properties" label="Editor type" />
      <Spacer $grow={2} />
      <SearchBox label="Search properties" />
      <Spacer $grow={3} />
      <Group><Seg $w={22} aria-label="Options"><Icon name="chevron" /></Seg></Group>
    </Header>
    <PropsBody>
      <PropTabs>
        {propTabs.map(group => (
          <div key={group[0]}>
            {group.map(name => (
              <PropTab key={name} $active={name === 'render'} aria-label={name}><Icon name={name} size={17} /></PropTab>
            ))}
          </div>
        ))}
      </PropTabs>
      <Panel>
        <Crumb>
          <Icon name="scene" />
          Scene
          <Spacer />
          <Icon name="pin" />
        </Crumb>
        <Fields $bottom={13}>
          <Field><label htmlFor="engine">Render Engine</label><Dropdown id="engine" value="Cycles" /></Field>
          <Field><label htmlFor="features">Feature Set</label><Dropdown id="features" value="Supported" /></Field>
          <Field><label htmlFor="device">Device</label><Dropdown id="device" value="CPU" /></Field>
          <Field $h={16}>
            <label htmlFor="osl" />
            <Row as="label" $gap={4}><Check id="osl" />Open Shading Lang...</Row>
          </Field>
        </Fields>
        <SectionHead title="Sampling" open list />
        <Fields $bottom={11} $bg="#383838">
          <Field><label htmlFor="integrator">Integrator</label><Dropdown id="integrator" value="Path Tracing" /></Field>
          <Stack>
            <Field><label htmlFor="samples">Render</label><NumberInput id="samples" $part="top" defaultValue="128" /></Field>
            <Field><label htmlFor="preview">Viewport</label><NumberInput id="preview" defaultValue="32" /></Field>
          </Stack>
        </Fields>
        <SectionHead sub title="Adaptive Sampling" check />
        <SectionHead sub title="Denoising" />
        <SectionHead sub title="Advanced" />
        <SectionHead title="Light Paths" list />
        <SectionHead title="Volumes" />
        <SectionHead title="Hair" />
        <SectionHead title="Simplify" check />
        <SectionHead title="Motion Blur" check />
        <SectionHead title="Film" />
        <SectionHead title="Performance" open />
        <SectionHead sub title="Threads" open />
        <Fields $bottom={10} $bg="#2f2f2f">
          <Field><label htmlFor="mode">Threads Mode</label><Dropdown id="mode" value="Auto-Detect" /></Field>
          <Field $dim><label htmlFor="threads">Threads</label><NumberInput id="threads" $part="top" defaultValue="16" /></Field>
        </Fields>
      </Panel>
    </PropsBody>
  </Area>
);

/* ---------- app ---------- */

const workspaces = [
  'Layout', 'Modeling', 'Shading', 'Sculpting', 'UV Editing', 'Texture Paint',
  'Animation', 'Rendering', 'Compositing', 'Geometry Nodes', 'Scripting',
];

const DataBlock = ({ icon, label, value }) => (
  <Group>
    <Seg $menu aria-label={`Browse ${label}`}><Icon name={icon} /><Icon name="chevron" /></Seg>
    <NameInput aria-label={label} defaultValue={value} />
    <Seg $w={24} $tone="mid" aria-label={`New ${label}`}><Icon name="copy" /></Seg>
    <Seg $w={24} aria-label={`Delete ${label}`}><Svg width="16" height="16" opacity=".4">{shapes.close}</Svg></Seg>
  </Group>
);

export default function App() {
  return (
    <Window>
      <GlobalStyle />
      <TitleBar>
        <Svg width="15" height="15" viewBox="0 0 24 24">
          <circle cx="15" cy="14" r="4" fill="#265787" />
          <SiBlender size={24} color="#ea7600" />
        </Svg>
        <span>Blender</span>
        <Spacer />
        <button aria-label="Minimize"><Svg width="10" height="10"><path d="M0 5.500h10" stroke="#000" /></Svg></button>
        <button aria-label="Restore">
          <Svg width="10" height="10"><path d="M.5 2.500h7v7h-7zM2.500 2.500v-2h7v7h-2" fill="none" stroke="#000" /></Svg>
        </button>
        <button aria-label="Close"><Svg width="10" height="10"><path d="m0 0 10 10M10 0 0 10" stroke="#000" /></Svg></button>
      </TitleBar>
      <TopBar>
        <Menus>
          <SiBlender size={20} color="#d8d8d8" />
          {['File', 'Edit', 'Render', 'Window', 'Help'].map(text => <MenuButton key={text} $wide>{text}</MenuButton>)}
        </Menus>
        <Tabs>
          {workspaces.map((name, i) => <Tab key={name} $active={i === 0}>{name}</Tab>)}
          <Tab $icon aria-label="Add workspace"><Icon name="plus" /></Tab>
        </Tabs>
        <Row $gap={6}>
          <DataBlock icon="scene" label="scene" value="Scene" />
          <DataBlock icon="viewLayer" label="view layer" value="View Layer" />
        </Row>
      </TopBar>
      <Main>
        <Column>
          <Viewport3D />
          <ShaderEditor />
        </Column>
        <Column $w={331}>
          <Outliner />
          <Properties />
        </Column>
      </Main>
      <StatusBar>
        <Row $basis={309}>
          <Hint><Mouse button="left" />Select</Hint>
          <Hint><Mouse button="left" drag />Box Select</Hint>
        </Row>
        <Row $basis={309}><Hint><Mouse button="middle" />Pan View</Hint></Row>
        <Row $basis={309}><Hint><Mouse button="right" />Node Context Menu</Hint></Row>
        <Spacer />
        Collection | Cube.003 | Verts:16 | Faces:12 | Tris:24 | Objects:1/4 | Memory: 27.2 MiB | 2.93.3
      </StatusBar>
    </Window>
  );
}
